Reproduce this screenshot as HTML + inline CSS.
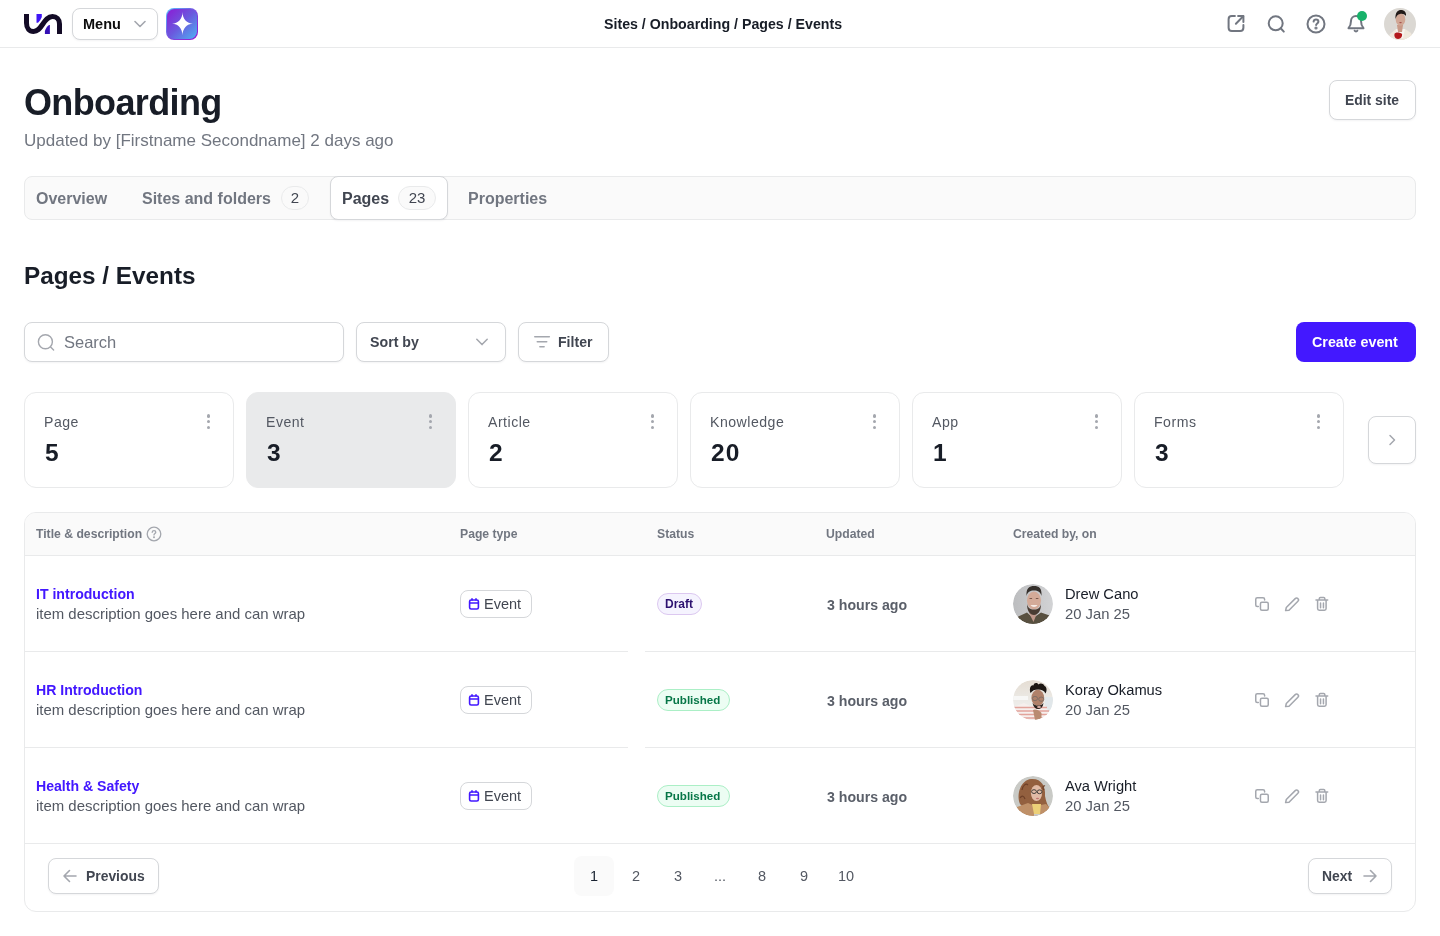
<!DOCTYPE html>
<html><head><meta charset="utf-8">
<style>
*{box-sizing:border-box;margin:0;padding:0}
html,body{width:1440px;height:936px;overflow:hidden;background:#fff;font-family:"Liberation Sans",sans-serif;color:#181d27}
.abs{position:absolute}
.hdr{position:absolute;left:0;top:0;width:1440px;height:48px;border-bottom:1px solid #e9eaeb}
.btn{position:absolute;border:1px solid #d5d7da;border-radius:8px;background:#fff;box-shadow:0 1px 2px rgba(16,24,40,.05)}
.t{position:absolute;white-space:nowrap;line-height:1;will-change:transform}
.ico{position:absolute;fill:none;stroke:#717680;stroke-width:2;stroke-linecap:round;stroke-linejoin:round}
.tabs{position:absolute;left:24px;top:176px;width:1392px;height:44px;background:#fafafa;border:1px solid #e9eaeb;border-radius:8px}
.tab{position:absolute;top:1px;height:42px;font-weight:bold;color:#717680;font-size:16px}
.badge{will-change:transform;position:absolute;height:24px;border:1px solid #e9eaeb;background:#fafafa;border-radius:12px;font-size:15px;color:#414651;text-align:center;line-height:22px}
.card{position:absolute;top:392px;width:210px;height:96px;border:1px solid #e9eaeb;border-radius:12px;background:#fff}
.card.sel{background:#e9eaeb;border-color:#e9eaeb}
.card .lab{will-change:transform;position:absolute;left:19px;top:21px;font-size:14.1px;letter-spacing:.5px;color:#535862;line-height:16px}
.card .num{will-change:transform;position:absolute;left:20px;top:48px;font-size:24.5px;letter-spacing:1.2px;font-weight:bold;color:#181d27;line-height:24px}
.card .kb{position:absolute;left:181.5px;top:21.2px;width:4px;height:16px}
.card .kb i{position:absolute;left:0;width:3.4px;height:3.4px;border-radius:50%;background:#a4a7ae}
.table{position:absolute;left:24px;top:512px;width:1392px;height:400px;border:1px solid #e9eaeb;border-radius:12px;overflow:hidden}
.th{position:absolute;top:0;left:0;width:1390px;height:43px;background:#fafafa;border-bottom:1px solid #e9eaeb}
.th span{position:absolute;top:15px;font-size:12.2px;font-weight:bold;color:#717680;line-height:14px}
.row{position:absolute;left:0;width:1390px;height:96px}
.row .div{position:absolute;top:95px;height:1px;background:#e9eaeb}
.ttl{position:absolute;left:11px;font-size:14px;font-weight:bold;color:#4318ff}
.desc{position:absolute;left:11px;font-size:14px;color:#535862}
</style></head><body>

<!-- header -->
<div class="hdr"></div>
<svg class="abs" style="left:24px;top:14px" width="39" height="20" viewBox="0 0 39 20">
  <path d="M2.5,0 V9 C2.5,14.5 5.5,17.5 9.5,17.5 C13.5,17.5 15.5,15 18.5,10.5 C21.5,6 24,2.5 28.5,2.5 C32.5,2.5 35.5,5.5 35.5,10 V20" fill="none" stroke="#130b26" stroke-width="5"/>
  <path d="M12.5,0 H17.8 V3 C17,5 15.5,7.5 14,8.7 H12.5 Z" fill="#3f16f5"/>
  <path d="M25.9,11 V20 H20.9 V17 C21.5,15 23,12.5 25,11 Z" fill="#3510b5"/>
</svg>
<div class="btn" style="left:72px;top:8px;width:86px;height:32px"></div>
<div class="t" style="left:83px;top:17px;font-size:14.5px;font-weight:bold;color:#0c0c0c">Menu</div>
<svg class="ico" style="left:134px;top:20px;stroke:#a4a7ae;stroke-width:1.6" width="12" height="8" viewBox="0 0 12 8"><path d="M1,1.5 L6,6.5 L11,1.5"/></svg>
<div class="abs" style="left:166px;top:8px;width:32px;height:32px;border-radius:8px;background:linear-gradient(135deg,#55c8ff 0%,#7a4fe0 50%,#9a12d0 100%)"></div>
<div class="abs" style="left:166.6px;top:8.6px;width:30.8px;height:30.8px;border-radius:7.5px;background:linear-gradient(135deg,#8c1bd5 0%,#6a5ade 50%,#4eb3f3 100%)"></div>
<svg class="abs" style="left:172px;top:12.3px" width="21" height="23.3" viewBox="0 0 21 23.3"><path d="M10.5,0 C10.5,7 15,11.65 21,11.65 C15,11.65 10.5,16.3 10.5,23.3 C10.5,16.3 6,11.65 0,11.65 C6,11.65 10.5,7 10.5,0 Z" fill="#fff"/></svg>

<div class="t" style="left:604px;top:17px;font-size:14.2px;font-weight:bold;color:#181d27">Sites / Onboarding / Pages / Events</div>

<!-- right icons -->
<svg class="ico" style="left:1226px;top:14px" width="20" height="20" viewBox="0 0 20 20"><path d="M8.9,2.1 H5.8 C4,2.1 2.6,3.5 2.6,5.3 V13.7 C2.6,15.5 4,16.9 5.8,16.9 H14.2 C16,16.9 17.4,15.5 17.4,13.7 V10.9"/><path d="M12.1,2.1 H17.4 V8.1"/><path d="M17.2,2.3 L9.9,9.7"/></svg>
<svg class="ico" style="left:1266px;top:14px" width="20" height="20" viewBox="0 0 20 20"><circle cx="9.7" cy="9.35" r="7"/><path d="M14.7,14.3 L17.8,17.6"/></svg>
<svg class="ico" style="left:1306px;top:14px" width="20" height="20" viewBox="0 0 20 20"><circle cx="10" cy="10" r="8.5"/><path d="M7.6,7.6 C7.8,6.4 8.8,5.6 10,5.6 C11.4,5.6 12.4,6.5 12.4,7.7 C12.4,9.2 10.1,9.6 10.1,11"/><circle cx="10" cy="14" r=".6" fill="#717680"/></svg>
<svg class="ico" style="left:1346px;top:14px" width="20" height="20" viewBox="0 0 20 20"><path d="M5,7 C5,4.2 7.2,2 10,2 C12.8,2 15,4.2 15,7 C15,10.8 16,12.5 17.5,14.2 H2.5 C4,12.5 5,10.8 5,7 Z"/><path d="M8.7,16.7 C9.3,17.6 10.7,17.6 11.3,16.7"/></svg>
<div class="abs" style="left:1357px;top:11px;width:10px;height:10px;border-radius:50%;background:#17b26a"></div>
<svg class="abs" style="left:1384px;top:8px" width="32" height="32" viewBox="0 0 32 32"><defs><clipPath id="ch"><circle cx="16" cy="16" r="16"/></clipPath></defs><g clip-path="url(#ch)"><rect width="32" height="32" fill="#dbd8d3"/><path d="M4,32 L6,26 L12,21 L16,25 L21,21 L27,25 L30,32 Z" fill="#efe8dc"/><path d="M12,21 L14,30 L19,30 L21,21 Z" fill="#f7f4ef"/><path d="M13,17 L19,17 L18,24 L14,24 Z" fill="#c99a87"/><ellipse cx="16.5" cy="11.5" rx="4.8" ry="6.2" fill="#d1a795"/><path d="M11.5,11 C11,4 14,2 17,2 C20,2 22.5,4 22,8 C20.5,6 18,5.5 16,6 C13.5,6.5 12.5,8 11.5,11 Z" fill="#211a18"/><ellipse cx="16.5" cy="14.6" rx="1.3" ry=".6" fill="#a5504a"/><path d="M10.5,26 C11,24 16,24 18,26 C18.5,28 17,31 14,31 C11,31 10,28 10.5,26 Z" fill="#b3181b"/></g></svg>

<!-- title -->
<div class="t" style="left:24px;top:85px;font-size:36px;letter-spacing:-0.64px;font-weight:bold;color:#181d27">Onboarding</div>
<div class="t" style="left:24px;top:132px;font-size:17px;color:#717680">Updated by [Firstname Secondname] 2 days ago</div>
<div class="btn" style="left:1329px;top:80px;width:87px;height:40px"></div>
<div class="t" style="left:1345px;top:94px;font-size:13.9px;font-weight:bold;color:#414651">Edit site</div>

<!-- tabs -->
<div class="tabs">
  <div class="t tab" style="left:11px;top:14px">Overview</div>
  <div class="t tab" style="left:117px;top:14px">Sites and folders</div>
  <div class="badge" style="left:256px;top:9px;width:28px">2</div>
  <div class="abs" style="left:305px;top:-1px;width:118px;height:44px;background:#fff;border:1px solid #d5d7da;border-radius:8px;box-shadow:0 1px 2px rgba(16,24,40,.05)"></div>
  <div class="t tab" style="left:317px;top:14px;color:#414651">Pages</div>
  <div class="badge" style="left:373px;top:9px;width:38px">23</div>
  <div class="t tab" style="left:443px;top:14px">Properties</div>
</div>

<div class="t" style="left:24px;top:264px;font-size:24.3px;font-weight:bold;color:#181d27">Pages / Events</div>

<!-- toolbar -->
<div class="btn" style="left:24px;top:322px;width:320px;height:40px"></div>
<svg class="ico" style="left:36px;top:333px;stroke:#a4a7ae;stroke-width:1.4" width="20" height="20" viewBox="0 0 20 20"><circle cx="9.4" cy="8.7" r="7"/><path d="M14.6,13.9 L17.6,16.9"/></svg>
<div class="t" style="left:64px;top:334px;font-size:16.5px;color:#717680">Search</div>
<div class="btn" style="left:356px;top:322px;width:150px;height:40px"></div>
<div class="t" style="left:370px;top:335px;font-size:14.2px;font-weight:bold;color:#414651">Sort by</div>
<svg class="ico" style="left:475px;top:337px;stroke:#a4a7ae;stroke-width:1.5" width="14" height="10" viewBox="0 0 14 10"><path d="M1.8,2.2 L7,7.6 L12.2,2.2"/></svg>
<div class="btn" style="left:518px;top:322px;width:91px;height:40px"></div>
<svg class="ico" style="left:532px;top:333px;stroke-width:1.6;stroke:#a4a7ae" width="20" height="20" viewBox="0 0 20 20"><path d="M2.8,3.7 H17.3 M5.3,8.8 H14.7 M7.9,13.8 H12.1"/></svg>
<div class="t" style="left:558px;top:335px;font-size:14.1px;font-weight:bold;color:#414651">Filter</div>
<div class="abs" style="left:1296px;top:322px;width:120px;height:40px;border-radius:8px;background:#4318ff"></div>
<div class="t" style="left:1312px;top:335px;font-size:14.3px;font-weight:bold;color:#fff">Create event</div>

<!-- cards -->
<div class="card" style="left:24px"><div class="lab">Page</div><div class="num">5</div><div class="kb"><i style="top:0"></i><i style="top:5.85px"></i><i style="top:11.7px"></i></div></div>
<div class="card sel" style="left:246px"><div class="lab">Event</div><div class="num">3</div><div class="kb"><i style="top:0"></i><i style="top:5.85px"></i><i style="top:11.7px"></i></div></div>
<div class="card" style="left:468px"><div class="lab">Article</div><div class="num">2</div><div class="kb"><i style="top:0"></i><i style="top:5.85px"></i><i style="top:11.7px"></i></div></div>
<div class="card" style="left:690px"><div class="lab">Knowledge</div><div class="num">20</div><div class="kb"><i style="top:0"></i><i style="top:5.85px"></i><i style="top:11.7px"></i></div></div>
<div class="card" style="left:912px"><div class="lab">App</div><div class="num">1</div><div class="kb"><i style="top:0"></i><i style="top:5.85px"></i><i style="top:11.7px"></i></div></div>
<div class="card" style="left:1134px"><div class="lab">Forms</div><div class="num">3</div><div class="kb"><i style="top:0"></i><i style="top:5.85px"></i><i style="top:11.7px"></i></div></div>
<div class="btn" style="left:1368px;top:416px;width:48px;height:48px"></div>
<svg class="ico" style="left:1386px;top:434px;stroke:#a4a7ae;stroke-width:1.5" width="12" height="12" viewBox="0 0 12 12"><path d="M4,1.5 L8.5,6 L4,10.5"/></svg>

<!-- TABLE -->
<div class="table" id="tbl">
<div class="th"></div>
</div>
<div class="t" style="left:36px;top:528px;font-size:12.2px;font-weight:bold;color:#717680">Title &amp; description</div>
<svg class="ico" style="left:146px;top:526px;stroke:#a4a7ae;stroke-width:1.3" width="16" height="16" viewBox="0 0 16 16"><circle cx="8" cy="8" r="6.8"/><path d="M6.2,6.3 C6.3,5.3 7.1,4.7 8,4.7 C9,4.7 9.8,5.4 9.8,6.3 C9.8,7.5 8,7.7 8,8.9"/><circle cx="8" cy="11.2" r=".4" fill="#a4a7ae"/></svg>
<div class="t" style="left:460px;top:528px;font-size:12.2px;font-weight:bold;color:#717680">Page type</div>
<div class="t" style="left:657px;top:528px;font-size:12.2px;font-weight:bold;color:#717680">Status</div>
<div class="t" style="left:826px;top:528px;font-size:12.2px;font-weight:bold;color:#717680">Updated</div>
<div class="t" style="left:1013px;top:528px;font-size:12.2px;font-weight:bold;color:#717680">Created by, on</div>

<div class="t" style="left:36px;top:587px;font-size:14.1px;font-weight:bold;color:#4318ff">IT introduction</div>
<div class="t" style="left:36px;top:607px;font-size:14.95px;color:#535862">item description goes here and can wrap</div>
<div class="abs" style="left:460px;top:590px;width:72px;height:28px;border:1px solid #d5d7da;border-radius:8px;background:#fff"></div>
<svg class="abs" style="left:467px;top:597px" width="14" height="14" viewBox="0 0 14 14"><rect x="2.6" y="3" width="8.8" height="9" rx="1.5" fill="none" stroke="#4318ff" stroke-width="1.6"/><path d="M2.6,6 H11.4 M5,1.3 V3.5 M9,1.3 V3.5" stroke="#4318ff" stroke-width="1.6"/></svg>
<div class="t" style="left:484px;top:597px;font-size:14.5px;color:#414651">Event</div><div class="abs" style="left:657px;top:593px;width:45px;height:22px;border:1px solid #dcc8f0;border-radius:11px;background:#f5f3fe"></div>
<div class="t" style="left:665px;top:598px;font-size:12px;font-weight:bold;color:#2d1270">Draft</div>
<div class="t" style="left:826.5px;top:598px;font-size:14.15px;font-weight:bold;color:#5a5f69">3 hours ago</div>
<div class="abs av0" style="filter:blur(.45px);left:1013px;top:584px;width:40px;height:40px;border-radius:50%;overflow:hidden"><svg width="40" height="40" viewBox="0 0 40 40"><defs><clipPath id="c0"><circle cx="20" cy="20" r="20"/></clipPath><linearGradient id="g0" x1="0" y1="0" x2="1" y2="0"><stop offset="0" stop-color="#bcbdbf"/><stop offset="1" stop-color="#d2d3d5"/></linearGradient></defs><g clip-path="url(#c0)"><rect width="40" height="40" fill="url(#g0)"/><path d="M0,40 L2,34 L14,28.5 L20,34 L28,28.5 L38,32 L40,40 Z" fill="#585040"/><path d="M16,29 L24,29 L20.5,38 Z" fill="#c0978a"/><ellipse cx="21" cy="16.5" rx="7" ry="9" fill="#d3aa98"/><path d="M14,20 C14,27 17,31 21,31 C25,31 28,27 28,20 C27,24 25,25.5 21,25.5 C17,25.5 15,24 14,20 Z" fill="#4a3c33"/><path d="M13.5,12 C13,4 16.5,2 21,2 C26,2 29,4 28.5,12 C27.5,8 25,6.5 21,6.5 C17,6.5 14.5,8 13.5,12 Z" fill="#35302c"/><path d="M17.5,21 C19,23.5 23,23.5 24.5,21 Z" fill="#f5ebe6"/><rect x="16.5" y="14" width="2.6" height="1" fill="#7a5a4c"/><rect x="22.8" y="14" width="2.6" height="1" fill="#7a5a4c"/></g></svg></div>
<div class="t" style="left:1065px;top:587px;font-size:14.7px;color:#181d27">Drew Cano</div>
<div class="t" style="left:1065px;top:607px;font-size:14.8px;color:#535862">20 Jan 25</div>
<svg class="ico" style="left:1253px;top:596px;stroke:#a4a7ae;stroke-width:1.5" width="18" height="18" viewBox="0 0 18 18"><rect x="7.45" y="6.15" width="7.8" height="8" rx="1.5"/><path d="M5.3,10.6 H4.3 C3.4,10.6 2.75,9.9 2.75,9.1 V3.2 C2.75,2.3 3.4,1.65 4.3,1.65 H10 C10.9,1.65 11.6,2.3 11.6,3.2 V3.9"/></svg>
<svg class="ico" style="left:1283px;top:596px;stroke:#a4a7ae;stroke-width:1.5" width="18" height="18" viewBox="0 0 18 18"><path d="M2.6,14.6 L3.3,11.5 L12.2,2.6 C13,1.8 14.2,1.8 14.9,2.6 C15.7,3.4 15.7,4.5 14.9,5.3 L6,14.2 Z"/></svg>
<svg class="ico" style="left:1313px;top:596px;stroke:#a4a7ae;stroke-width:1.5" width="18" height="18" viewBox="0 0 18 18"><path d="M3,3.9 H14.7 M6.3,3.9 V2.6 C6.3,2 6.8,1.5 7.4,1.5 H10.7 C11.3,1.5 11.8,2 11.8,2.6 V3.9 M4.6,3.9 V12.6 C4.6,13.5 5.3,14.25 6.2,14.25 H11.5 C12.4,14.25 13.1,13.5 13.1,12.6 V3.9 M7.55,7.1 V11.8 M10.45,7.1 V11.8"/></svg>
<div class="abs" style="left:25px;top:651px;width:603px;height:1px;background:#e9eaeb"></div>
<div class="abs" style="left:645px;top:651px;width:770px;height:1px;background:#e9eaeb"></div>
<div class="t" style="left:36px;top:683px;font-size:14.1px;font-weight:bold;color:#4318ff">HR Introduction</div>
<div class="t" style="left:36px;top:703px;font-size:14.95px;color:#535862">item description goes here and can wrap</div>
<div class="abs" style="left:460px;top:686px;width:72px;height:28px;border:1px solid #d5d7da;border-radius:8px;background:#fff"></div>
<svg class="abs" style="left:467px;top:693px" width="14" height="14" viewBox="0 0 14 14"><rect x="2.6" y="3" width="8.8" height="9" rx="1.5" fill="none" stroke="#4318ff" stroke-width="1.6"/><path d="M2.6,6 H11.4 M5,1.3 V3.5 M9,1.3 V3.5" stroke="#4318ff" stroke-width="1.6"/></svg>
<div class="t" style="left:484px;top:693px;font-size:14.5px;color:#414651">Event</div><div class="abs" style="left:657px;top:689px;width:73px;height:22px;border:1px solid #abefc6;border-radius:11px;background:#ecfdf3"></div>
<div class="t" style="left:665px;top:694px;font-size:11.6px;font-weight:bold;color:#067647">Published</div>
<div class="t" style="left:826.5px;top:694px;font-size:14.15px;font-weight:bold;color:#5a5f69">3 hours ago</div>
<div class="abs av1" style="filter:blur(.45px);left:1013px;top:680px;width:40px;height:40px;border-radius:50%;overflow:hidden"><svg width="40" height="40" viewBox="0 0 40 40"><defs><clipPath id="c1"><circle cx="20" cy="20" r="20"/></clipPath><linearGradient id="g1" x1="0" y1="0" x2="0" y2="1"><stop offset="0" stop-color="#e5ddd3"/><stop offset=".5" stop-color="#eceae6"/><stop offset="1" stop-color="#f2f2f2"/></linearGradient></defs><g clip-path="url(#c1)"><rect width="40" height="40" fill="url(#g1)"/><rect x="0" y="16" width="15" height="4" fill="#f7f7f6"/><rect x="32" y="17" width="8" height="15" fill="#e1e7ea"/><path d="M0,40 L0,27 L11,23 L21,28 L33,26 L39,40 Z" fill="#f6efed"/><path d="M1,27.5 H34 M1,31 H36 M1,34.5 H37 M2,38 H37" stroke="#e2a39b" stroke-width="1.3"/><ellipse cx="24.8" cy="17.8" rx="6.4" ry="8" fill="#b0816a"/><path d="M19.5,23 C20.5,27 22.5,29 25,29 C28,29 30,27 30.5,23 C29,25 27,25.5 25,25.5 C23,25.5 21,25 19.5,23 Z" fill="#2a201b"/><path d="M17.5,13 C16,9 17.5,4.5 20.5,5.5 C21,2.5 24,2.5 25.5,4.5 C27,2.5 31,3.5 31.5,6 C33.5,6.5 34.5,10 32.5,13.5 C31,10.5 29,9.5 25,9.5 C21.5,9.5 19.5,10.5 17.5,13 Z" fill="#1d1714"/><ellipse cx="22" cy="18.5" rx="2.6" ry="2.1" fill="none" stroke="#6f6864" stroke-width=".7"/><ellipse cx="28.3" cy="19.2" rx="2.6" ry="2.1" fill="none" stroke="#6f6864" stroke-width=".7"/><ellipse cx="26" cy="27" rx="2" ry=".9" fill="#e0b2aa"/><path d="M20,30 C22,28.5 27,30.5 28.5,33 L28.5,40 L22,40 Z" fill="#b98a70"/></g></svg></div>
<div class="t" style="left:1065px;top:683px;font-size:14.7px;color:#181d27">Koray Okamus</div>
<div class="t" style="left:1065px;top:703px;font-size:14.8px;color:#535862">20 Jan 25</div>
<svg class="ico" style="left:1253px;top:692px;stroke:#a4a7ae;stroke-width:1.5" width="18" height="18" viewBox="0 0 18 18"><rect x="7.45" y="6.15" width="7.8" height="8" rx="1.5"/><path d="M5.3,10.6 H4.3 C3.4,10.6 2.75,9.9 2.75,9.1 V3.2 C2.75,2.3 3.4,1.65 4.3,1.65 H10 C10.9,1.65 11.6,2.3 11.6,3.2 V3.9"/></svg>
<svg class="ico" style="left:1283px;top:692px;stroke:#a4a7ae;stroke-width:1.5" width="18" height="18" viewBox="0 0 18 18"><path d="M2.6,14.6 L3.3,11.5 L12.2,2.6 C13,1.8 14.2,1.8 14.9,2.6 C15.7,3.4 15.7,4.5 14.9,5.3 L6,14.2 Z"/></svg>
<svg class="ico" style="left:1313px;top:692px;stroke:#a4a7ae;stroke-width:1.5" width="18" height="18" viewBox="0 0 18 18"><path d="M3,3.9 H14.7 M6.3,3.9 V2.6 C6.3,2 6.8,1.5 7.4,1.5 H10.7 C11.3,1.5 11.8,2 11.8,2.6 V3.9 M4.6,3.9 V12.6 C4.6,13.5 5.3,14.25 6.2,14.25 H11.5 C12.4,14.25 13.1,13.5 13.1,12.6 V3.9 M7.55,7.1 V11.8 M10.45,7.1 V11.8"/></svg>
<div class="abs" style="left:25px;top:747px;width:603px;height:1px;background:#e9eaeb"></div>
<div class="abs" style="left:645px;top:747px;width:770px;height:1px;background:#e9eaeb"></div>
<div class="t" style="left:36px;top:779px;font-size:14.1px;font-weight:bold;color:#4318ff">Health &amp; Safety</div>
<div class="t" style="left:36px;top:799px;font-size:14.95px;color:#535862">item description goes here and can wrap</div>
<div class="abs" style="left:460px;top:782px;width:72px;height:28px;border:1px solid #d5d7da;border-radius:8px;background:#fff"></div>
<svg class="abs" style="left:467px;top:789px" width="14" height="14" viewBox="0 0 14 14"><rect x="2.6" y="3" width="8.8" height="9" rx="1.5" fill="none" stroke="#4318ff" stroke-width="1.6"/><path d="M2.6,6 H11.4 M5,1.3 V3.5 M9,1.3 V3.5" stroke="#4318ff" stroke-width="1.6"/></svg>
<div class="t" style="left:484px;top:789px;font-size:14.5px;color:#414651">Event</div><div class="abs" style="left:657px;top:785px;width:73px;height:22px;border:1px solid #abefc6;border-radius:11px;background:#ecfdf3"></div>
<div class="t" style="left:665px;top:790px;font-size:11.6px;font-weight:bold;color:#067647">Published</div>
<div class="t" style="left:826.5px;top:790px;font-size:14.15px;font-weight:bold;color:#5a5f69">3 hours ago</div>
<div class="abs av2" style="filter:blur(.45px);left:1013px;top:776px;width:40px;height:40px;border-radius:50%;overflow:hidden"><svg width="40" height="40" viewBox="0 0 40 40"><defs><clipPath id="c2"><circle cx="20" cy="20" r="20"/></clipPath></defs><g clip-path="url(#c2)"><rect width="40" height="40" fill="#c9cac6"/><path d="M7,28 C3,18 8,4 18,3 C28,2 33,10 32,20 C33,26 35,30 37,33 L28,35 L12,33 Z" fill="#93603f"/><path d="M9,14 C10,9 13,7 15,9 M7,22 C9,19 11,20 12,23 M31,14 C29,12 30,9 32,10" stroke="#6e4028" stroke-width="1.2" fill="none"/><ellipse cx="23.5" cy="17" rx="5.6" ry="8" fill="#e1bba6"/><ellipse cx="21" cy="15.6" rx="2.4" ry="1.9" fill="none" stroke="#45403b" stroke-width="1"/><ellipse cx="26.6" cy="15.8" rx="2.4" ry="1.9" fill="none" stroke="#45403b" stroke-width="1"/><ellipse cx="24.5" cy="22.5" rx="1.6" ry=".7" fill="#c07670"/><path d="M0,40 L4,31 L15,27 L22,30 L33,28 L39,34 L40,40 Z" fill="#bf9068"/><path d="M19,28 L28,28 L27,38 L21,38 Z" fill="#ecd078"/><rect x="21" y="38" width="13" height="3" fill="#c9cbc9"/></g></svg></div>
<div class="t" style="left:1065px;top:779px;font-size:14.7px;color:#181d27">Ava Wright</div>
<div class="t" style="left:1065px;top:799px;font-size:14.8px;color:#535862">20 Jan 25</div>
<svg class="ico" style="left:1253px;top:788px;stroke:#a4a7ae;stroke-width:1.5" width="18" height="18" viewBox="0 0 18 18"><rect x="7.45" y="6.15" width="7.8" height="8" rx="1.5"/><path d="M5.3,10.6 H4.3 C3.4,10.6 2.75,9.9 2.75,9.1 V3.2 C2.75,2.3 3.4,1.65 4.3,1.65 H10 C10.9,1.65 11.6,2.3 11.6,3.2 V3.9"/></svg>
<svg class="ico" style="left:1283px;top:788px;stroke:#a4a7ae;stroke-width:1.5" width="18" height="18" viewBox="0 0 18 18"><path d="M2.6,14.6 L3.3,11.5 L12.2,2.6 C13,1.8 14.2,1.8 14.9,2.6 C15.7,3.4 15.7,4.5 14.9,5.3 L6,14.2 Z"/></svg>
<svg class="ico" style="left:1313px;top:788px;stroke:#a4a7ae;stroke-width:1.5" width="18" height="18" viewBox="0 0 18 18"><path d="M3,3.9 H14.7 M6.3,3.9 V2.6 C6.3,2 6.8,1.5 7.4,1.5 H10.7 C11.3,1.5 11.8,2 11.8,2.6 V3.9 M4.6,3.9 V12.6 C4.6,13.5 5.3,14.25 6.2,14.25 H11.5 C12.4,14.25 13.1,13.5 13.1,12.6 V3.9 M7.55,7.1 V11.8 M10.45,7.1 V11.8"/></svg>

<div class="abs" style="left:25px;top:843px;width:1390px;height:1px;background:#e9eaeb"></div>
<div class="btn" style="left:48px;top:858px;width:111px;height:36px"></div>
<svg class="ico" style="left:60px;top:866px;stroke:#a4a7ae;stroke-width:1.6" width="20" height="20" viewBox="0 0 20 20"><path d="M16,10 H4 M9.5,4.5 L4,10 L9.5,15.5"/></svg>
<div class="t" style="left:86px;top:870px;font-size:13.9px;font-weight:bold;color:#414651">Previous</div>
<div class="abs" style="left:574px;top:856px;width:40px;height:40px;border-radius:8px;background:#fafafa"></div>
<div class="t pn" style="left:574px;top:869px;width:40px;text-align:center;font-size:14.5px;color:#182230">1</div>
<div class="t pn" style="left:616px;top:869px;width:40px;text-align:center;font-size:14.5px;color:#535862">2</div>
<div class="t pn" style="left:658px;top:869px;width:40px;text-align:center;font-size:14.5px;color:#535862">3</div>
<div class="t pn" style="left:700px;top:869px;width:40px;text-align:center;font-size:14.5px;color:#535862">...</div>
<div class="t pn" style="left:742px;top:869px;width:40px;text-align:center;font-size:14.5px;color:#535862">8</div>
<div class="t pn" style="left:784px;top:869px;width:40px;text-align:center;font-size:14.5px;color:#535862">9</div>
<div class="t pn" style="left:826px;top:869px;width:40px;text-align:center;font-size:14.5px;color:#535862">10</div>
<div class="btn" style="left:1308px;top:858px;width:84px;height:36px"></div>
<div class="t" style="left:1322px;top:870px;font-size:13.9px;font-weight:bold;color:#414651">Next</div>
<svg class="ico" style="left:1360px;top:866px;stroke:#a4a7ae;stroke-width:1.6" width="20" height="20" viewBox="0 0 20 20"><path d="M4,10 H16 M10.5,4.5 L16,10 L10.5,15.5"/></svg>


</body></html>
